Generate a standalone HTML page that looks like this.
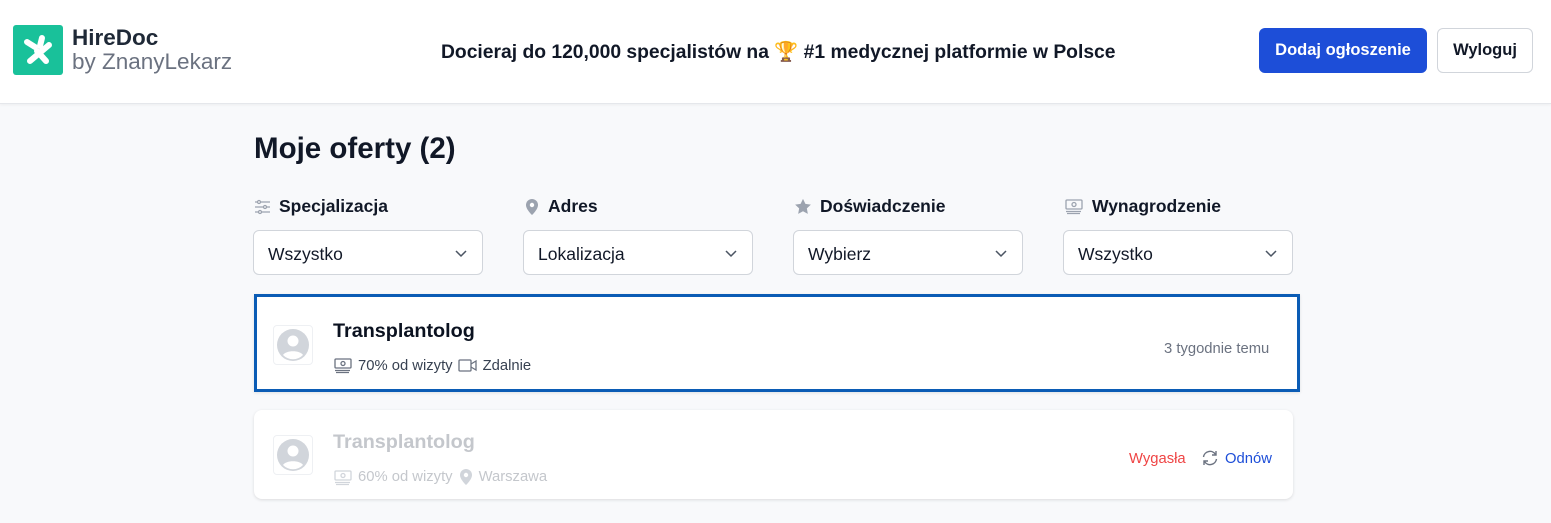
<!DOCTYPE html>
<html><head><meta charset="utf-8"><style>
*{margin:0;padding:0;box-sizing:border-box}
body{width:1551px;height:523px;background:#f8f9fb;font-family:"Liberation Sans",sans-serif;position:relative;overflow:hidden;color:#111827}
.a{position:absolute}
.hdr{left:0;top:0;width:1551px;height:104px;background:#fff;border-bottom:1px solid #e5e7eb;box-shadow:0 1px 3px rgba(0,0,0,.05)}
.lbl{font-size:17.5px;font-weight:bold;color:#111827;display:flex;align-items:center;gap:8px}
.sel{width:230px;height:45px;background:#fff;border:1px solid #d1d5db;border-radius:6px;font-size:17.5px;padding:13px 14px;color:#111827}
.sel svg{position:absolute;right:14px;top:15px}
.card{background:#fff}
.av{width:40px;height:40px;border:1px solid #eef0f3;border-radius:4px;background:#fff}
.meta{font-size:14.8px;color:#374151;display:flex;align-items:center;gap:5px}
</style></head><body>
<div class="a hdr"></div>
<div class="a" style="left:13px;top:25px;width:50px;height:50px;background:#19c19a;border-radius:3px">
<svg width="50" height="50" viewBox="0 0 50 50"><g stroke="#fff" stroke-width="6" stroke-linecap="round" fill="none"><path d="M14 17 L22 22"/><path d="M29 13 L27 21"/><path d="M36 20 L17 36"/><path d="M24 26 L33 36"/></g></svg>
</div>
<div class="a" style="left:72px;top:25px;font-size:22.5px;font-weight:bold;color:#1f2937">HireDoc</div>
<div class="a" style="left:72px;top:49px;font-size:22.5px;color:#6b7280">by ZnanyLekarz</div>
<div class="a" style="left:441px;top:40px;font-size:19.3px;font-weight:bold;color:#111827;white-space:nowrap">Docieraj do 120,000 specjalistów na 🏆 #1 medycznej platformie w Polsce</div>
<div class="a" style="left:1259px;top:28px;width:168px;height:45px;background:#1d4ed8;border-radius:6px;color:#fff;font-size:16.5px;font-weight:bold;text-align:center;line-height:45px">Dodaj ogłoszenie</div>
<div class="a" style="left:1437px;top:28px;width:96px;height:45px;background:#fff;border:1px solid #d1d5db;border-radius:6px;font-size:16.5px;font-weight:bold;text-align:center;line-height:43px">Wyloguj</div>

<div class="a" style="left:254px;top:132px;font-size:29.5px;font-weight:bold">Moje oferty (2)</div>

<div class="a lbl" style="left:254px;top:196px"><svg width="17" height="17" viewBox="0 0 17 17" stroke="#9ca3af" fill="none" stroke-width="1.3"><path d="M1 4h15M1 9h15M1 14h15"/><circle cx="5" cy="4" r="1.5" fill="#fff"/><circle cx="11" cy="9" r="1.5" fill="#fff"/><circle cx="6" cy="14" r="1.5" fill="#fff"/></svg>Specjalizacja</div>
<div class="a lbl" style="left:524px;top:196px"><svg width="16" height="18" viewBox="0 0 16 18"><path d="M8 1a6 6 0 0 0-6 6c0 4.5 6 10 6 10s6-5.5 6-10a6 6 0 0 0-6-6z" fill="#9ca3af"/><circle cx="8" cy="7" r="2.2" fill="#fff"/></svg>Adres</div>
<div class="a lbl" style="left:794px;top:196px"><svg width="18" height="17" viewBox="0 0 20 19"><path d="M10 1l2.7 5.6 6.1.8-4.5 4.2 1.1 6.1L10 14.8 4.6 17.7l1.1-6.1L1.2 7.4l6.1-.8z" fill="#9ca3af"/></svg>Doświadczenie</div>
<div class="a lbl" style="left:1064px;top:196px"><svg width="20" height="17" viewBox="0 0 20 17" fill="none" stroke="#9ca3af" stroke-width="1.3"><rect x="2" y="2" width="16" height="9" rx="1"/><circle cx="10" cy="6.5" r="2"/><path d="M2 13.5h15M3 15.5h13"/></svg>Wynagrodzenie</div>

<div class="a sel" style="left:253px;top:230px">Wszystko<svg width="14" height="14" viewBox="0 0 14 14"><path d="M2 5l5 5 5-5" stroke="#4b5563" stroke-width="1.5" fill="none"/></svg></div>
<div class="a sel" style="left:523px;top:230px">Lokalizacja<svg width="14" height="14" viewBox="0 0 14 14"><path d="M2 5l5 5 5-5" stroke="#4b5563" stroke-width="1.5" fill="none"/></svg></div>
<div class="a sel" style="left:793px;top:230px">Wybierz<svg width="14" height="14" viewBox="0 0 14 14"><path d="M2 5l5 5 5-5" stroke="#4b5563" stroke-width="1.5" fill="none"/></svg></div>
<div class="a sel" style="left:1063px;top:230px">Wszystko<svg width="14" height="14" viewBox="0 0 14 14"><path d="M2 5l5 5 5-5" stroke="#4b5563" stroke-width="1.5" fill="none"/></svg></div>

<div class="a card" style="left:254px;top:294px;width:1046px;height:98px;border:3px solid #0b5cb5;box-shadow:0 1px 3px rgba(0,0,0,.1)"></div>
<div class="a av" style="left:273px;top:325px"><svg width="38" height="38" viewBox="0 0 38 38"><circle cx="19" cy="19" r="16" fill="#d1d5db"/><circle cx="19" cy="15" r="5.5" fill="#fff"/><path d="M9 29c3-5 17-5 20 0a14 14 0 0 1-20 0z" fill="#fff"/></svg></div>
<div class="a" style="left:333px;top:320px;font-size:19.8px;font-weight:bold;color:#0b1220">Transplantolog</div>
<div class="a meta" style="left:333px;top:357px"><svg width="20" height="17" viewBox="0 0 20 17" fill="none" stroke="#6b7280" stroke-width="1.3"><rect x="2" y="2" width="16" height="9" rx="1"/><circle cx="10" cy="6.5" r="2"/><path d="M2 13.5h15M3 15.5h13"/></svg>70% od wizyty <svg width="20" height="15" viewBox="0 0 20 15" fill="none" stroke="#6b7280" stroke-width="1.3"><rect x="1" y="2" width="12" height="11" rx="1"/><path d="M13 6l5-3v9l-5-3"/></svg>Zdalnie</div>
<div class="a" style="left:1164px;top:341px;font-size:14.8px;color:#6b7280">3 tygodnie temu</div>

<div class="a card" style="left:254px;top:410px;width:1039px;height:89px;border-radius:8px;box-shadow:0 1px 3px rgba(0,0,0,.12)"></div>
<div class="a av" style="left:273px;top:435px"><svg width="38" height="38" viewBox="0 0 38 38"><circle cx="19" cy="19" r="16" fill="#d1d5db"/><circle cx="19" cy="15" r="5.5" fill="#fff"/><path d="M9 29c3-5 17-5 20 0a14 14 0 0 1-20 0z" fill="#fff"/></svg></div>
<div class="a" style="left:333px;top:431px;font-size:19.8px;font-weight:bold;color:#c4c7cc">Transplantolog</div>
<div class="a meta" style="left:333px;top:468px;color:#c4c7cc"><svg width="20" height="17" viewBox="0 0 20 17" fill="none" stroke="#d1d5db" stroke-width="1.3"><rect x="2" y="2" width="16" height="9" rx="1"/><circle cx="10" cy="6.5" r="2"/><path d="M2 13.5h15M3 15.5h13"/></svg>60% od wizyty <svg width="16" height="18" viewBox="0 0 16 18"><path d="M8 1a6 6 0 0 0-6 6c0 4.5 6 10 6 10s6-5.5 6-10a6 6 0 0 0-6-6z" fill="#d1d5db"/><circle cx="8" cy="7" r="2.2" fill="#fff"/></svg>Warszawa</div>
<div class="a" style="left:1129px;top:451px;font-size:14.8px;color:#ef4444">Wygasła</div>
<div class="a" style="left:1201px;top:449px"><svg width="18" height="18" viewBox="0 0 18 18" fill="none" stroke="#6b7280" stroke-width="1.4"><path d="M2.5 8a6.5 6.5 0 0 1 12-2.5M15.5 10a6.5 6.5 0 0 1-12 2.5"/><path d="M15 2v4h-4M3 16v-4h4"/></svg></div>
<div class="a" style="left:1225px;top:451px;font-size:14.8px;color:#1d4ed8">Odnów</div>
</body></html>
